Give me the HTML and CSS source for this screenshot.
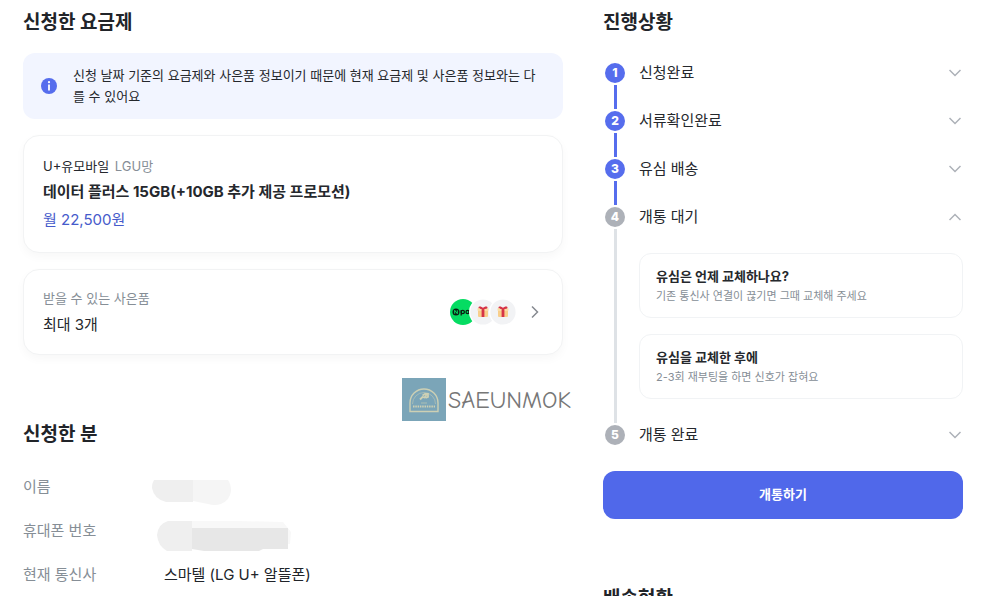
FILE: index.html
```html
<!DOCTYPE html>
<html lang="ko">
<head>
<meta charset="utf-8">
<meta name="viewport" content="width=device-width, initial-scale=1">
<title>신청 내역</title>
<link rel="stylesheet" href="styles.css">
</head>
<body>
<main class="page">
  <div class="column">
    <section>
      <h2 class="heading">신청한 요금제</h2>
      <div class="notice">
        <svg class="notice-icon" viewBox="0 0 16 16" aria-hidden="true"><circle cx="8" cy="8" r="8" fill="#566ded"/><circle cx="8" cy="4.2" r="1.1" fill="#fff"/><path d="M8 6.500V12.500" fill="none" stroke="#fff" stroke-width="1.8"/></svg>
        <p class="notice-text">신청 날짜 기준의 요금제와 사은품 정보이기 때문에 현재 요금제 및 사은품 정보와는 다를 수 있어요</p>
      </div>
      <article class="card plan">
        <p class="carrier">U+유모바일 <span class="network">LGU망</span></p>
        <h3 class="plan-name">데이터 플러스 15GB(+10GB 추가 제공 프로모션)</h3>
        <p class="price">월 22,500원</p>
      </article>
      <a class="card gifts" href="#gifts">
        <span class="gift-copy">
          <span class="gift-label">받을 수 있는 사은품</span>
          <span class="gift-count">최대 3개</span>
        </span>
        <svg class="gift-icons" viewBox="0 0 66 26" aria-hidden="true">
          <defs>
            <clipPath id="pay"><circle cx="13" cy="13" r="13"/></clipPath>
            <g id="gift">
              <circle r="14" fill="#fff"/>
              <circle r="12.6" fill="#f2f3f5"/>
              <rect x="-5" y="-3" width="10" height="8" rx="1" fill="#f8cf8c"/>
              <rect x="-5.5" y="-4" width="11" height="3" rx="1" fill="#fbdca6"/>
              <path d="M-1.4-3h2.8v8h-2.8z" fill="#d63447"/>
              <path d="M0-3C-2-3-4.500-3-4.500-4.500S-1.500-6 0-4C1.500-6 4.500-6 4.500-4.500S2-3 0-3z" fill="#d63447"/>
            </g>
          </defs>
          <g clip-path="url(#pay)">
            <rect width="26" height="26" fill="#05dc62"/>
            <circle cx="6" cy="13" r="3.500" fill="#0b1d12"/>
            <path d="M4.700 14.700v-3.400l2.600 3.400v-3.400" fill="none" stroke="#05dc62"/>
            <g fill="none" stroke="#0b1d12" stroke-width="1.300"><circle cx="12.800" cy="13" r="1.600"/><path d="M11.200 11v5.500M19.300 11v4"/><circle cx="17.600" cy="13" r="1.600"/></g>
          </g>
          <use href="#gift" x="33" y="13"/>
          <use href="#gift" x="53" y="13"/>
        </svg>
        <svg class="arrow" viewBox="0 0 8 14" aria-hidden="true"><path d="M1 1.500 6.500 7 1 12.500"/></svg>
      </a>
    </section>

    <section class="applicant">
      <h2 class="heading">신청한 분</h2>
      <dl class="facts">
        <div class="fact"><dt>이름</dt><dd><svg class="mask-name" viewBox="0 0 80 28" aria-hidden="true"><path d="M2 1h39v22H14Q2 20 0 9Q0 4 2 1z" fill="#efefef"/><path d="M41 1h35q3 4 3 11-1 9-10 13-6 2-13 0l-15-3z" fill="#f5f5f5"/></svg></dd></div>
        <div class="fact"><dt>휴대폰 번호</dt><dd><svg class="mask-phone" viewBox="0 0 144 32" aria-hidden="true"><path d="M35 1h50l46 1 8 10-1 12H35z" fill="#f8f8f8"/><path d="M16 1h24v30H15Q6 26 5 15 6 4 16 1z" fill="#efefef"/><path d="M40 8h96v21H111l-4 2H52l-12-2z" fill="#e7e7e7"/></svg></dd></div>
        <div class="fact"><dt>현재 통신사</dt><dd class="fact-text">스마텔 (LG U+ 알뜰폰)</dd></div>
      </dl>
    </section>
  </div>

  <div class="column">
    <section>
      <h2 class="heading">진행상황</h2>
      <ol class="steps">
        <li class="step done">
          <div class="rail"><span class="badge">1</span></div>
          <div class="step-body"><button class="step-head" type="button" aria-expanded="false">신청완료<svg class="chevron" viewBox="0 0 12 8" aria-hidden="true"><path d="m.5 1 5.500 5.500L11.500 1"/></svg></button></div>
        </li>
        <li class="step done">
          <div class="rail"><span class="badge">2</span></div>
          <div class="step-body"><button class="step-head" type="button" aria-expanded="false">서류확인완료<svg class="chevron" viewBox="0 0 12 8" aria-hidden="true"><path d="m.5 1 5.500 5.500L11.500 1"/></svg></button></div>
        </li>
        <li class="step done">
          <div class="rail"><span class="badge">3</span></div>
          <div class="step-body"><button class="step-head" type="button" aria-expanded="false">유심 배송<svg class="chevron" viewBox="0 0 12 8" aria-hidden="true"><path d="m.5 1 5.500 5.500L11.500 1"/></svg></button></div>
        </li>
        <li class="step">
          <div class="rail"><span class="badge">4</span></div>
          <div class="step-body">
            <button class="step-head" type="button" aria-expanded="true">개통 대기<svg class="chevron" viewBox="0 0 12 8" aria-hidden="true"><path d="M.5 7 6 1.500 11.500 7"/></svg></button>
            <div class="tips">
              <article class="tip"><h3 class="tip-title">유심은 언제 교체하나요?</h3><p class="tip-text">기존 통신사 연결이 끊기면 그때 교체해 주세요</p></article>
              <article class="tip"><h3 class="tip-title">유심을 교체한 후에</h3><p class="tip-text">2-3회 재부팅을 하면 신호가 잡혀요</p></article>
            </div>
          </div>
        </li>
        <li class="step">
          <div class="rail"><span class="badge">5</span></div>
          <div class="step-body"><button class="step-head" type="button" aria-expanded="false">개통 완료<svg class="chevron" viewBox="0 0 12 8" aria-hidden="true"><path d="m.5 1 5.500 5.500L11.500 1"/></svg></button></div>
        </li>
      </ol>
      <button class="primary" type="button">개통하기</button>
    </section>
    <section class="delivery">
      <h2 class="heading">배송현황</h2>
    </section>
  </div>

  <div class="watermark">
    <svg class="watermark-logo" viewBox="0 0 44 43" aria-hidden="true">
      <rect width="44" height="43" fill="#7ba5b8"/>
      <g fill="none" stroke="#cdd0b4" stroke-width="1.400"><path d="M8 33.500V25a14 14 0 0 1 28 0v8.500z"/><path d="M10.500 26a11.500 11.500 0 0 1 23 0" stroke-width=".5"/><path d="M18 21.500l2.500-2.500 2 .500 2-2.500M20.500 17.500l2.500-1.500h3v3l-2.500 1" stroke-width="1.800"/><path d="M11 28.500h22" stroke-width="2" stroke-dasharray="1.500 .8"/><path d="M19 25h6" stroke-width=".6"/></g>
    </svg>
    <span>SAEUNMOK</span>
  </div>
</main>
</body>
</html>
```
FILE: styles.css
```css
* { box-sizing: border-box; }
html { overflow: hidden; }
body {
  margin: 0;
  background: #fff;
  color: #25282d;
  font-family: Inter, "Noto Sans CJK KR", sans-serif;
  font-size: 15px;
  line-height: 24px;
}
h2, h3, p, ol, dl, dd { margin: 0; padding: 0; }
button { font: inherit; color: inherit; border: 0; background: none; padding: 0; cursor: pointer; }
svg { display: block; flex: none; }

.page {
  position: relative;
  display: grid;
  grid-template-columns: 3fr 2fr;
  gap: 40px;
  padding: 9px 32px 0 23px;
}
.heading { font-size: 19px; line-height: 28px; font-weight: 700; color: #212429; }

.notice {
  display: flex;
  align-items: center;
  gap: 16px;
  margin-top: 16px;
  padding: 12px 20px 12px 18px;
  border-radius: 12px;
  background: #f2f5ff;
}
.notice-icon { width: 16px; height: 16px; }
.notice-text { font-size: 13px; line-height: 21px; }

.card {
  margin-top: 16px;
  border: 1px solid #f2f3f4;
  border-radius: 16px;
  background: #fff;
  box-shadow: 0 4px 10px rgb(0 0 0 / 3%);
}
.plan { padding: 18px 19px; }
.carrier { font-size: 13px; line-height: 24px; }
.network { margin-left: 2px; color: #868e96; }
.plan-name { font-size: 15px; line-height: 28px; font-weight: 700; }
.price { font-size: 15px; line-height: 28px; color: #465bcb; }

.gifts {
  display: flex;
  align-items: center;
  padding: 15px 23px 15px 19px;
  color: inherit;
  text-decoration: none;
}
.gift-copy { display: flex; flex-direction: column; flex: 1; }
.gift-label { font-size: 13px; line-height: 26px; color: #868e96; }
.gift-count { line-height: 28px; }
.gift-icons { width: 66px; height: 26px; }
.arrow { width: 8px; height: 14px; margin-left: 15px; }
.arrow path, .chevron path { fill: none; stroke: #868a90; stroke-width: 1.5; }

.applicant { margin-top: 66px; }
.facts { margin-top: 16px; }
.fact { display: flex; align-items: center; height: 44px; }
.fact dt { width: 129px; color: #868e96; }
.fact dd { color: #212429; }
.fact .fact-text { padding-left: 12px; }
.mask-name { width: 80px; height: 28px; margin-top: 12px; }
.mask-phone { width: 144px; height: 32px; margin-top: 10px; }

.steps { margin-top: 26px; list-style: none; }
.step { display: flex; gap: 14px; min-height: 48px; }
.step:last-child { min-height: 20px; }
.rail { display: flex; flex-direction: column; align-items: center; padding-left: 2px; }
.rail::after { content: ""; flex: 1; width: 3px; margin: 2px 0; background: #dee2e6; }
.step:last-child .rail::after { display: none; }
.badge {
  width: 20px;
  border-radius: 50%;
  background: #adb1b8;
  color: #fff;
  font-size: 12px;
  line-height: 20px;
  font-weight: 800;
  text-align: center;
}
.done .badge, .done .rail::after { background: #566ded; }
.step-body { flex: 1; }
.step-head {
  display: flex;
  align-items: center;
  justify-content: space-between;
  width: 100%;
  padding-right: 2px;
  line-height: 20px;
}
.chevron { width: 12px; height: 8px; }
.chevron path { stroke: #adb1b8; }
.tips { display: grid; gap: 16px; padding: 26px 0; }
.tip { padding: 11px 16px 12px; border: 1px solid #f1f3f5; border-radius: 12px; }
.tip-title { font-size: 13px; line-height: 22px; font-weight: 700; }
.tip-text { font-size: 11px; line-height: 18px; color: #868e96; }
.primary {
  width: 100%;
  height: 48px;
  margin-top: 26px;
  padding-bottom: 2px;
  border-radius: 12px;
  background: #5068ea;
  color: #fff;
  font-size: 13px;
  font-weight: 700;
}
.delivery { margin-top: 66px; }

.watermark {
  position: absolute;
  left: 402px;
  top: 378px;
  display: flex;
  align-items: center;
  gap: 2px;
  color: #777;
  font-family: "Comic Sans MS", "Comic Neue", Lato, sans-serif;
  font-size: 24px;
  font-weight: 500;
}
.watermark-logo { width: 44px; height: 43px; }
```
